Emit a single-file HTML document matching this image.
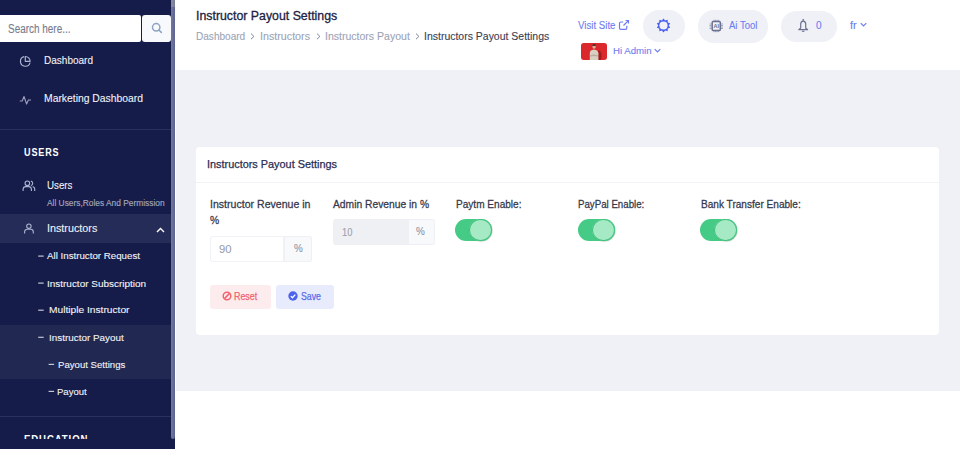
<!DOCTYPE html>
<html><head><meta charset="utf-8"><style>
html,body{margin:0;padding:0;width:960px;height:449px;overflow:hidden;background:#fff;}
.r{position:absolute;box-sizing:border-box;}
.t{position:absolute;white-space:nowrap;line-height:1;font-family:"Liberation Sans",sans-serif;transform-origin:0 0;}
</style></head><body>
<div class="r" style="left:0px;top:0px;width:175.00px;height:449.00px;background:#161c49;"></div>
<div class="r" style="left:0px;top:15px;width:141.00px;height:27.00px;background:#ffffff;border-radius:0 2px 2px 0;"></div>
<div class="r" style="left:142px;top:15px;width:29.00px;height:27.00px;background:#f8f9fc;border-radius:3px;"></div>
<span class="t" style="left:7.90px;top:23px;font-size:12px;color:#767b8d;font-weight:normal;transform:scaleX(0.8292);-webkit-text-stroke:0.1px #767b8d;">Search here...</span>
<svg class="r" style="left:150px;top:21px" width="14" height="14" viewBox="0 0 14 14"><circle cx="6.2" cy="6.3" r="3.7" fill="none" stroke="#8ea3c4" stroke-width="1.5"/><path d="M8.9 9L11.3 11.4" stroke="#8ea3c4" stroke-width="1.6" stroke-linecap="round"/></svg>
<span class="t" style="left:43.50px;top:55px;font-size:11.5px;color:#f2f3f8;font-weight:normal;transform:scaleX(0.8710);-webkit-text-stroke:0.1px #f2f3f8;">Dashboard</span>
<svg class="r" style="left:19px;top:55px" width="13" height="13" viewBox="0 0 13 13"><path d="M5.2 1.6A4.9 4.9 0 1 0 11.1 7.6" fill="none" stroke="#a9b4d0" stroke-width="1.2"/><path d="M6.3 1.5V6.3H11.1A4.8 4.8 0 0 0 6.3 1.5Z" fill="none" stroke="#a9b4d0" stroke-width="1.2" stroke-linejoin="round"/></svg>
<span class="t" style="left:43.50px;top:93px;font-size:11.5px;color:#f2f3f8;font-weight:normal;transform:scaleX(0.9004);-webkit-text-stroke:0.1px #f2f3f8;">Marketing Dashboard</span>
<svg class="r" style="left:19px;top:94px" width="13" height="12" viewBox="0 0 13 12"><path d="M0.8 7H3.2L5 2.5L7.6 10L9.4 6H12" fill="none" stroke="#9aa0bc" stroke-width="1.1" stroke-linejoin="round"/></svg>
<div class="r" style="left:0px;top:129px;width:171.00px;height:1.00px;background:#2a3161;"></div>
<span class="t" style="left:23.60px;top:147px;font-size:10.5px;color:#ffffff;font-weight:bold;transform:scaleX(0.8613);letter-spacing:1px;">USERS</span>
<svg class="r" style="left:22px;top:180px" width="14" height="12" viewBox="0 0 14 12"><g fill="none" stroke="#aab5d2" stroke-width="1.1"><circle cx="5.35" cy="3.35" r="2.3"/><path d="M1.1 11V9.4A2.8 2.8 0 0 1 3.9 6.6H6.6A2.8 2.8 0 0 1 9.4 9.4V11"/><path d="M8.9 1.1A2.3 2.3 0 0 1 8.9 5.6M10.6 6.7A2.4 2.4 0 0 1 12.7 9.2V11"/></g></svg>
<span class="t" style="left:47.00px;top:180px;font-size:11.5px;color:#f2f3f8;font-weight:normal;transform:scaleX(0.8459);-webkit-text-stroke:0.1px #f2f3f8;">Users</span>
<span class="t" style="left:47.00px;top:199px;font-size:9px;color:#a4a8bd;font-weight:normal;transform:scaleX(0.9293);-webkit-text-stroke:0.15px #a4a8bd;">All Users,Roles And Permission</span>
<div class="r" style="left:0px;top:214px;width:171.00px;height:29.00px;background:#252c57;"></div>
<svg class="r" style="left:23px;top:223px" width="12" height="11" viewBox="0 0 12 11"><g fill="none" stroke="#aab5d2" stroke-width="1.1"><circle cx="5.9" cy="3.2" r="2.2"/><path d="M1.6 10.6V8.9A2.7 2.7 0 0 1 4.3 6.2H7.6A2.7 2.7 0 0 1 10.3 8.9V10.6"/></g></svg>
<span class="t" style="left:47.00px;top:223px;font-size:11.5px;color:#f2f3f8;font-weight:normal;transform:scaleX(0.9370);-webkit-text-stroke:0.1px #f2f3f8;">Instructors</span>
<svg class="r" style="left:156px;top:227px" width="9" height="6" viewBox="0 0 9 6"><path d="M1 5L4.5 1.5L8 5" fill="none" stroke="#ffffff" stroke-width="1.4"/></svg>
<svg class="r" style="left:0px;top:253px" width="60" height="6" viewBox="0 0 60 6"><rect x="38.20" y="2.50" width="5.5" height="1.2" fill="#c2c5d6"/></svg>
<span class="t" style="left:47.00px;top:251px;font-size:9.75px;color:#f2f3f8;font-weight:normal;transform:scaleX(0.9977);-webkit-text-stroke:0.1px #f2f3f8;">All Instructor Request</span>
<svg class="r" style="left:0px;top:280px" width="60" height="6" viewBox="0 0 60 6"><rect x="38.20" y="2.50" width="5.5" height="1.2" fill="#c2c5d6"/></svg>
<span class="t" style="left:47.00px;top:279px;font-size:9.75px;color:#f2f3f8;font-weight:normal;transform:scaleX(1.0206);-webkit-text-stroke:0.1px #f2f3f8;">Instructor Subscription</span>
<svg class="r" style="left:0px;top:307px" width="60" height="6" viewBox="0 0 60 6"><rect x="38.20" y="2.60" width="5.5" height="1.2" fill="#c2c5d6"/></svg>
<span class="t" style="left:49.00px;top:305px;font-size:9.75px;color:#f2f3f8;font-weight:normal;transform:scaleX(1.0462);-webkit-text-stroke:0.1px #f2f3f8;">Multiple Instructor</span>
<div class="r" style="left:0px;top:324.6px;width:171.00px;height:54.00px;background:#212953;"></div>
<svg class="r" style="left:0px;top:334px" width="60" height="6" viewBox="0 0 60 6"><rect x="38.20" y="2.70" width="5.5" height="1.2" fill="#c2c5d6"/></svg>
<span class="t" style="left:49.00px;top:333px;font-size:9.75px;color:#f2f3f8;font-weight:normal;transform:scaleX(1.0149);-webkit-text-stroke:0.1px #f2f3f8;">Instructor Payout</span>
<svg class="r" style="left:0px;top:361px" width="60" height="6" viewBox="0 0 60 6"><rect x="48.60" y="2.80" width="5.5" height="1.2" fill="#c2c5d6"/></svg>
<span class="t" style="left:57.50px;top:360px;font-size:9.75px;color:#f2f3f8;font-weight:normal;transform:scaleX(0.9855);-webkit-text-stroke:0.1px #f2f3f8;">Payout Settings</span>
<svg class="r" style="left:0px;top:388px" width="60" height="6" viewBox="0 0 60 6"><rect x="48.60" y="2.80" width="5.5" height="1.2" fill="#c2c5d6"/></svg>
<span class="t" style="left:57.40px;top:387px;font-size:9.75px;color:#f2f3f8;font-weight:normal;transform:scaleX(0.9785);-webkit-text-stroke:0.1px #f2f3f8;">Payout</span>
<div class="r" style="left:0px;top:416px;width:171.00px;height:1.00px;background:#2a3161;"></div>
<div class="r" style="left:0;top:0;width:171px;height:439px;overflow:hidden"><span class="t" style="left:23.70px;top:434px;font-size:10.5px;color:#ffffff;font-weight:bold;transform:scaleX(0.9105);letter-spacing:1px;">EDUCATION</span></div>
<div class="r" style="left:171px;top:0px;width:4.00px;height:438.50px;background:linear-gradient(90deg,#74789a,#5d6392);border-radius:0 0 2px 2px;"></div>
<div class="r" style="left:171px;top:0px;width:4.00px;height:7.00px;background:linear-gradient(90deg,#8a8da0,#7a7e98);"></div>
<div class="r" style="left:176px;top:70px;width:784.00px;height:320.50px;background:#f0f1f6;"></div>
<span class="t" style="left:195.80px;top:10px;font-size:12.5px;color:#20223f;font-weight:normal;transform:scaleX(0.9866);-webkit-text-stroke:0.3px #20223f;">Instructor Payout Settings</span>
<span class="t" style="left:195.80px;top:31px;font-size:11px;color:#9ca3b4;font-weight:normal;transform:scaleX(0.9143);-webkit-text-stroke:0.1px #9ca3b4;">Dashboard</span>
<span class="t" style="left:260.00px;top:31px;font-size:11px;color:#9ca3b4;font-weight:normal;transform:scaleX(0.9737);-webkit-text-stroke:0.1px #9ca3b4;">Instructors</span>
<span class="t" style="left:324.90px;top:31px;font-size:11px;color:#9ca3b4;font-weight:normal;transform:scaleX(0.9566);-webkit-text-stroke:0.1px #9ca3b4;">Instructors Payout</span>
<span class="t" style="left:424.00px;top:31px;font-size:11px;color:#3a3d52;font-weight:normal;transform:scaleX(0.9525);-webkit-text-stroke:0.1px #3a3d52;">Instructors Payout Settings</span>
<svg class="r" style="left:250.1px;top:33px" width="5" height="7" viewBox="0 0 5 7"><path d="M1 0.6L3.9 3.4L1 6.2" fill="none" stroke="#80859a" stroke-width="1"/></svg>
<svg class="r" style="left:316.0px;top:33px" width="5" height="7" viewBox="0 0 5 7"><path d="M1 0.6L3.9 3.4L1 6.2" fill="none" stroke="#80859a" stroke-width="1"/></svg>
<svg class="r" style="left:414.5px;top:33px" width="5" height="7" viewBox="0 0 5 7"><path d="M1 0.6L3.9 3.4L1 6.2" fill="none" stroke="#80859a" stroke-width="1"/></svg>
<span class="t" style="left:577.90px;top:21px;font-size:10px;color:#6c7cf0;font-weight:normal;transform:scaleX(0.9685);-webkit-text-stroke:0.1px #6c7cf0;">Visit Site</span>
<svg class="r" style="left:618px;top:19px" width="12" height="12" viewBox="0 0 12 12"><path d="M5.2 3H2.8A1.3 1.3 0 0 0 1.5 4.3V9A1.3 1.3 0 0 0 2.8 10.3H7.5A1.3 1.3 0 0 0 8.8 9V6.8" fill="none" stroke="#6c7cf0" stroke-width="1.2"/><path d="M5.5 6.5L10.4 1.6M7.6 1.5H10.5V4.4" fill="none" stroke="#6c7cf0" stroke-width="1.2"/></svg>
<div class="r" style="left:643px;top:10px;width:42.00px;height:31.50px;background:#eff1f7;border-radius:16px;"></div>
<svg class="r" style="left:656.1px;top:17.5px" width="15" height="15" viewBox="0 0 15 15"><polygon points="7.50,0.50 9.14,2.46 11.61,1.84 11.79,4.38 14.16,5.34 12.80,7.50 14.16,9.66 11.79,10.62 11.61,13.16 9.14,12.54 7.50,14.50 5.86,12.54 3.39,13.16 3.21,10.62 0.84,9.66 2.20,7.50 0.84,5.34 3.21,4.38 3.39,1.84 5.86,2.46" fill="#4a5ff0"/><circle cx="7.5" cy="7.5" r="4.1" fill="#eff1f7"/></svg>
<div class="r" style="left:697.5px;top:10px;width:70.00px;height:32.50px;background:#eff1f7;border-radius:16px;"></div>
<svg class="r" style="left:709px;top:19px" width="15" height="14" viewBox="0 0 15 14"><g stroke="#8d93a8" stroke-width="0.8"><path d="M5 0.8V2.5M6.5 0.8V2.5M8 0.8V2.5M9.5 0.8V2.5M5 11.5V13.2M6.5 11.5V13.2M8 11.5V13.2M9.5 11.5V13.2M0.6 5H2.5M0.6 6.5H2.5M0.6 8H2.5M0.6 9.5H2.5M12 5H13.9M12 6.5H13.9M12 8H13.9M12 9.5H13.9"/></g><rect x="3.2" y="2.6" width="8.1" height="8.8" rx="0.8" fill="none" stroke="#6b7390" stroke-width="1.5"/><text x="7.25" y="9.3" font-family="Liberation Sans" font-weight="bold" font-size="5.6" text-anchor="middle" fill="#6b7390">AI</text></svg>
<span class="t" style="left:729.30px;top:21px;font-size:10px;color:#6c7cf0;font-weight:normal;transform:scaleX(0.9521);-webkit-text-stroke:0.1px #6c7cf0;">Ai Tool</span>
<div class="r" style="left:781px;top:10.5px;width:56.00px;height:31.10px;background:#eff1f7;border-radius:16px;"></div>
<svg class="r" style="left:797px;top:18px" width="13" height="15" viewBox="0 0 13 15"><circle cx="6.2" cy="1.9" r="0.9" fill="#6b7390"/><path d="M3.7 10V6.2C3.7 4.3 4.6 3.1 6.2 3.1C7.8 3.1 8.7 4.3 8.7 6.2V10L10.6 11.7H1.8Z" fill="none" stroke="#6b7390" stroke-width="1.2" stroke-linejoin="round"/><path d="M5 12.9Q6.2 14 7.4 12.9" fill="none" stroke="#6b7390" stroke-width="1.1"/></svg>
<span class="t" style="left:816.40px;top:21px;font-size:10px;color:#6c7cf0;font-weight:normal;transform:scaleX(1.0072);-webkit-text-stroke:0.1px #6c7cf0;">0</span>
<span class="t" style="left:850.25px;top:21px;font-size:10px;color:#6c7cf0;font-weight:normal;transform:scaleX(1.1047);-webkit-text-stroke:0.1px #6c7cf0;">fr</span>
<svg class="r" style="left:859.5px;top:22px" width="7" height="6" viewBox="0 0 7 6"><path d="M0.7 1.2L3.5 4L6.3 1.2" fill="none" stroke="#6c7cf0" stroke-width="1.2"/></svg>
<svg class="r" style="left:581px;top:43px" width="26" height="17" viewBox="0 0 26 17"><defs><clipPath id="av"><rect x="0" y="0" width="26" height="17" rx="3"/></clipPath></defs><g clip-path="url(#av)"><rect width="26" height="17" fill="#e02b2f"/><rect x="0" y="0" width="26" height="17" fill="#c81f24" opacity="0.25"/><ellipse cx="18" cy="13" rx="2.6" ry="5.5" fill="#a8191c"/><path d="M8.8 17V10.2Q8.9 6.9 12.9 6.5Q17 6.9 17.4 10.2V17Z" fill="#d9cfc2"/><path d="M9.3 12.3Q13 10.6 16.9 12.3V13.8Q13 12.4 9.3 13.8Z" fill="#b9ac9a"/><ellipse cx="13.1" cy="3.6" rx="1.7" ry="2.2" fill="#d4b49b"/><path d="M11.3 3.2Q11.4 1 13.1 1Q14.9 1 14.9 3.2Q13.1 2.2 11.3 3.2Z" fill="#3a2a24"/></g></svg>
<span class="t" style="left:613.30px;top:46px;font-size:9.5px;color:#6c7cf0;font-weight:normal;transform:scaleX(1.0153);-webkit-text-stroke:0.1px #6c7cf0;">Hi Admin</span>
<svg class="r" style="left:654px;top:48px" width="7" height="6" viewBox="0 0 7 6"><path d="M0.7 1.2L3.5 4L6.3 1.2" fill="none" stroke="#6c7cf0" stroke-width="1.2"/></svg>
<div class="r" style="left:196px;top:147px;width:743.00px;height:188.00px;background:#ffffff;border-radius:4px;"></div>
<div class="r" style="left:196px;top:182px;width:743.00px;height:1.00px;background:#f1f2f6;"></div>
<span class="t" style="left:206.80px;top:159px;font-size:11px;color:#2a2d52;font-weight:normal;transform:scaleX(0.9890);-webkit-text-stroke:0.25px #2a2d52;">Instructors Payout Settings</span>
<span class="t" style="left:209.80px;top:199px;font-size:11.5px;color:#35384b;font-weight:normal;transform:scaleX(0.9194);-webkit-text-stroke:0.28px #35384b;">Instructor Revenue in</span>
<span class="t" style="left:209.80px;top:215px;font-size:11.5px;color:#35384b;font-weight:normal;transform:scaleX(0.8999);-webkit-text-stroke:0.28px #35384b;">%</span>
<div class="r" style="left:210px;top:236px;width:74.40px;height:26.20px;background:#ffffff;box-shadow:inset 0 0 0 1px #f1f2f6;border-radius:3px 0 0 3px;"></div>
<div class="r" style="left:284.4px;top:236px;width:27.40px;height:26.20px;background:#f8f9fb;box-shadow:inset 0 0 0 1px #eff0f5;border-radius:0 3px 3px 0;"></div>
<span class="t" style="left:218.80px;top:244px;font-size:11.5px;color:#9aa0ae;font-weight:normal;transform:scaleX(0.9775);-webkit-text-stroke:0.1px #9aa0ae;">90</span>
<span class="t" style="left:293.80px;top:243px;font-size:11px;color:#8e93a3;font-weight:normal;transform:scaleX(0.8999);-webkit-text-stroke:0.1px #8e93a3;">%</span>
<span class="t" style="left:332.60px;top:199px;font-size:11.5px;color:#35384b;font-weight:normal;transform:scaleX(0.8949);-webkit-text-stroke:0.28px #35384b;">Admin Revenue in %</span>
<div class="r" style="left:332.6px;top:219px;width:75.30px;height:26.20px;background:#eff0f4;border-radius:3px 0 0 3px;"></div>
<div class="r" style="left:407.9px;top:219px;width:26.90px;height:26.20px;background:#f8f9fb;box-shadow:inset 0 0 0 1px #eff0f5;border-radius:0 3px 3px 0;"></div>
<span class="t" style="left:341.70px;top:227px;font-size:11px;color:#9aa0ae;font-weight:normal;transform:scaleX(0.8502);-webkit-text-stroke:0.1px #9aa0ae;">10</span>
<span class="t" style="left:416.20px;top:226px;font-size:11px;color:#8e93a3;font-weight:normal;transform:scaleX(0.8999);-webkit-text-stroke:0.1px #8e93a3;">%</span>
<span class="t" style="left:455.70px;top:199px;font-size:11.5px;color:#35384b;font-weight:normal;transform:scaleX(0.8758);-webkit-text-stroke:0.28px #35384b;">Paytm Enable:</span>
<div class="r" style="left:455.4px;top:218.8px;width:36.60px;height:22.60px;background:#45cb85;border-radius:12px;"></div>
<div class="r" style="left:469.29999999999995px;top:218.7px;width:22.90px;height:22.80px;background:#a5eac4;border-radius:50%;box-shadow:inset 0 0 0 1px #43c27f,0.5px 0.5px 1px rgba(20,90,50,0.35);"></div>
<span class="t" style="left:578.25px;top:199px;font-size:11.5px;color:#35384b;font-weight:normal;transform:scaleX(0.8425);-webkit-text-stroke:0.28px #35384b;">PayPal Enable:</span>
<div class="r" style="left:577.95px;top:218.8px;width:36.60px;height:22.60px;background:#45cb85;border-radius:12px;"></div>
<div class="r" style="left:591.85px;top:218.7px;width:22.90px;height:22.80px;background:#a5eac4;border-radius:50%;box-shadow:inset 0 0 0 1px #43c27f,0.5px 0.5px 1px rgba(20,90,50,0.35);"></div>
<span class="t" style="left:700.75px;top:199px;font-size:11.5px;color:#35384b;font-weight:normal;transform:scaleX(0.8766);-webkit-text-stroke:0.28px #35384b;">Bank Transfer Enable:</span>
<div class="r" style="left:700.45px;top:218.8px;width:36.60px;height:22.60px;background:#45cb85;border-radius:12px;"></div>
<div class="r" style="left:714.35px;top:218.7px;width:22.90px;height:22.80px;background:#a5eac4;border-radius:50%;box-shadow:inset 0 0 0 1px #43c27f,0.5px 0.5px 1px rgba(20,90,50,0.35);"></div>
<div class="r" style="left:209.8px;top:285.3px;width:61.00px;height:24.10px;background:#fdeced;border-radius:3px;"></div>
<svg class="r" style="left:221.8px;top:291.2px" width="10" height="10" viewBox="0 0 10 10"><circle cx="5" cy="5" r="3.8" fill="none" stroke="#f06470" stroke-width="1.5"/><path d="M2.4 7.6L7.6 2.4" stroke="#f06470" stroke-width="1.5"/></svg>
<span class="t" style="left:234.30px;top:292px;font-size:10px;color:#f06470;font-weight:normal;transform:scaleX(0.8882);-webkit-text-stroke:0.25px #f06470;">Reset</span>
<div class="r" style="left:276.1px;top:285.3px;width:57.60px;height:24.10px;background:#e8ebfb;border-radius:3px;"></div>
<svg class="r" style="left:288.3px;top:291px" width="10" height="10" viewBox="0 0 10 10"><circle cx="5" cy="5" r="4.7" fill="#4d63ee"/><path d="M2.8 5.1L4.4 6.7L7.3 3.6" fill="none" stroke="#ffffff" stroke-width="1.3"/></svg>
<span class="t" style="left:300.50px;top:292px;font-size:10px;color:#5a6ded;font-weight:normal;transform:scaleX(0.8776);-webkit-text-stroke:0.25px #5a6ded;">Save</span>
</body></html>
